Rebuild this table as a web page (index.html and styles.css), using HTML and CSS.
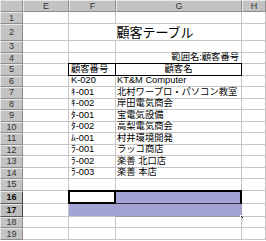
FILE: index.html
```html
<!DOCTYPE html>
<html lang="ja">
<head>
<meta charset="utf-8">
<link rel="stylesheet" href="styles.css">
</head>
<body>
<div class="sheet">
  <div class="corner"></div><div class="ch">E</div><div class="ch">F</div><div class="ch">G</div><div class="ch">H</div>

  <div class="rh">1</div><div class="c"></div><div class="c"></div><div class="c"></div><div class="c"></div>
  <div class="rh">2</div><div class="c"></div><div class="c title">顧客テーブル</div><div class="c"></div>
  <div class="rh">3</div><div class="c"></div><div class="c"></div><div class="c"></div><div class="c"></div>
  <div class="rh">4</div><div class="c"></div><div class="c"></div><div class="c right">範囲名:顧客番号</div><div class="c"></div>
  <div class="rh">5</div><div class="c"></div><div class="c code hbox">顧客番号</div><div class="c center hbox">顧客名</div><div class="c"></div>
  <div class="rh">6</div><div class="c"></div><div class="c code">K-020</div><div class="c name">KT&amp;M Computer</div><div class="c"></div>
  <div class="rh">7</div><div class="c"></div><div class="c code">ｷ-001</div><div class="c name">北村ワープロ・パソコン教室</div><div class="c"></div>
  <div class="rh">8</div><div class="c"></div><div class="c code">ｷ-002</div><div class="c name">岸田電気商会</div><div class="c"></div>
  <div class="rh">9</div><div class="c"></div><div class="c code">ﾀ-001</div><div class="c name">宝電気設備</div><div class="c"></div>
  <div class="rh">10</div><div class="c"></div><div class="c code">ﾀ-002</div><div class="c name">高梨電気商会</div><div class="c"></div>
  <div class="rh">11</div><div class="c"></div><div class="c code">ﾑ-001</div><div class="c name">村井環境開発</div><div class="c"></div>
  <div class="rh">12</div><div class="c"></div><div class="c code">ﾗ-001</div><div class="c name">ラッコ商店</div><div class="c"></div>
  <div class="rh">13</div><div class="c"></div><div class="c code">ﾗ-002</div><div class="c name">楽善 北口店</div><div class="c"></div>
  <div class="rh">14</div><div class="c"></div><div class="c code">ﾗ-003</div><div class="c name">楽善 本店</div><div class="c"></div>
  <div class="rh">15</div><div class="c"></div><div class="c"></div><div class="c"></div><div class="c"></div>
  <div class="rh sel">16</div><div class="c"></div><div class="c active"></div><div class="c hi hi-top"></div><div class="c"></div>
  <div class="rh sel">17</div><div class="c"></div><div class="c hi hi-left"></div><div class="c hi hi-end"><span class="handle"></span></div><div class="c"></div>
  <div class="rh">18</div><div class="c"></div><div class="c"></div><div class="c"></div><div class="c"></div>
  <div class="rh">19</div><div class="c"></div><div class="c"></div><div class="c"></div><div class="c"></div>
</div>
</body>
</html>
```

FILE: styles.css
```css
* { box-sizing: border-box; }
html, body { margin: 0; padding: 0; background: #ffffff; }
body { width: 266px; height: 241px; overflow: hidden; }

.sheet {
  display: grid;
  grid-template-columns: 23px 46px 47px 126px 24px;
  grid-template-rows: 12px 12px 17px repeat(13, 11.5px) 13px 13px 11.5px 12px;
  font-family: "Liberation Sans", "Noto Sans CJK JP", sans-serif;
  font-size: 9.3px;
  color: #000;
}

.corner, .ch, .rh {
  background: #c3c3c3;
  border-right: 1px solid #8c8c8c;
  border-bottom: 1px solid #8c8c8c;
  border-left: 1px solid #e8e8e8;
  border-top: 1px solid #e8e8e8;
}
.ch, .rh {
  display: flex;
  align-items: center;
  justify-content: center;
  font-family: "Liberation Sans", Arial, sans-serif;
  font-size: 9px;
  color: #333;
  line-height: 1;
}
.rh.sel {
  font-weight: bold;
  color: #111;
  background: #bdbdbd;
  border-right-color: #444;
  border-bottom-color: #555;
}

.c {
  border-right: 1px solid #c6c6c6;
  border-bottom: 1px solid #c6c6c6;
  display: flex;
  align-items: center;
  white-space: nowrap;
  overflow: visible;
  line-height: 1;
  position: relative;
}

.title {
  grid-column: span 2;
  justify-content: center;
  font-size: 13px;
  padding-top: 1px;
}
.right { justify-content: flex-end; padding-right: 2px; }
.center { justify-content: center; }
.code { padding-left: 2px; }
.name { padding-left: 1px; }

.hbox {
  border: 1px solid #000;
  margin-left: -1px;
  margin-top: -1px;
}

.active {
  border: 2px solid #000;
  margin-left: -1px;
  margin-top: -1px;
}
.hi { background: #a3a3d6; }
.hi-top {
  border-top: 2px solid #000;
  border-right: 2px solid #000;
  border-bottom: 1px solid #333;
  margin-top: -1px;
}
.hi-left { border-right-color: #a3a3d6; }
.hi-end { border-right: 1px dotted #888; border-bottom: 1px solid #999; }
.handle {
  position: absolute;
  right: -3px;
  bottom: -3px;
  width: 4px;
  height: 4px;
  background: #000;
  border: 1px solid #fff;
}
```
